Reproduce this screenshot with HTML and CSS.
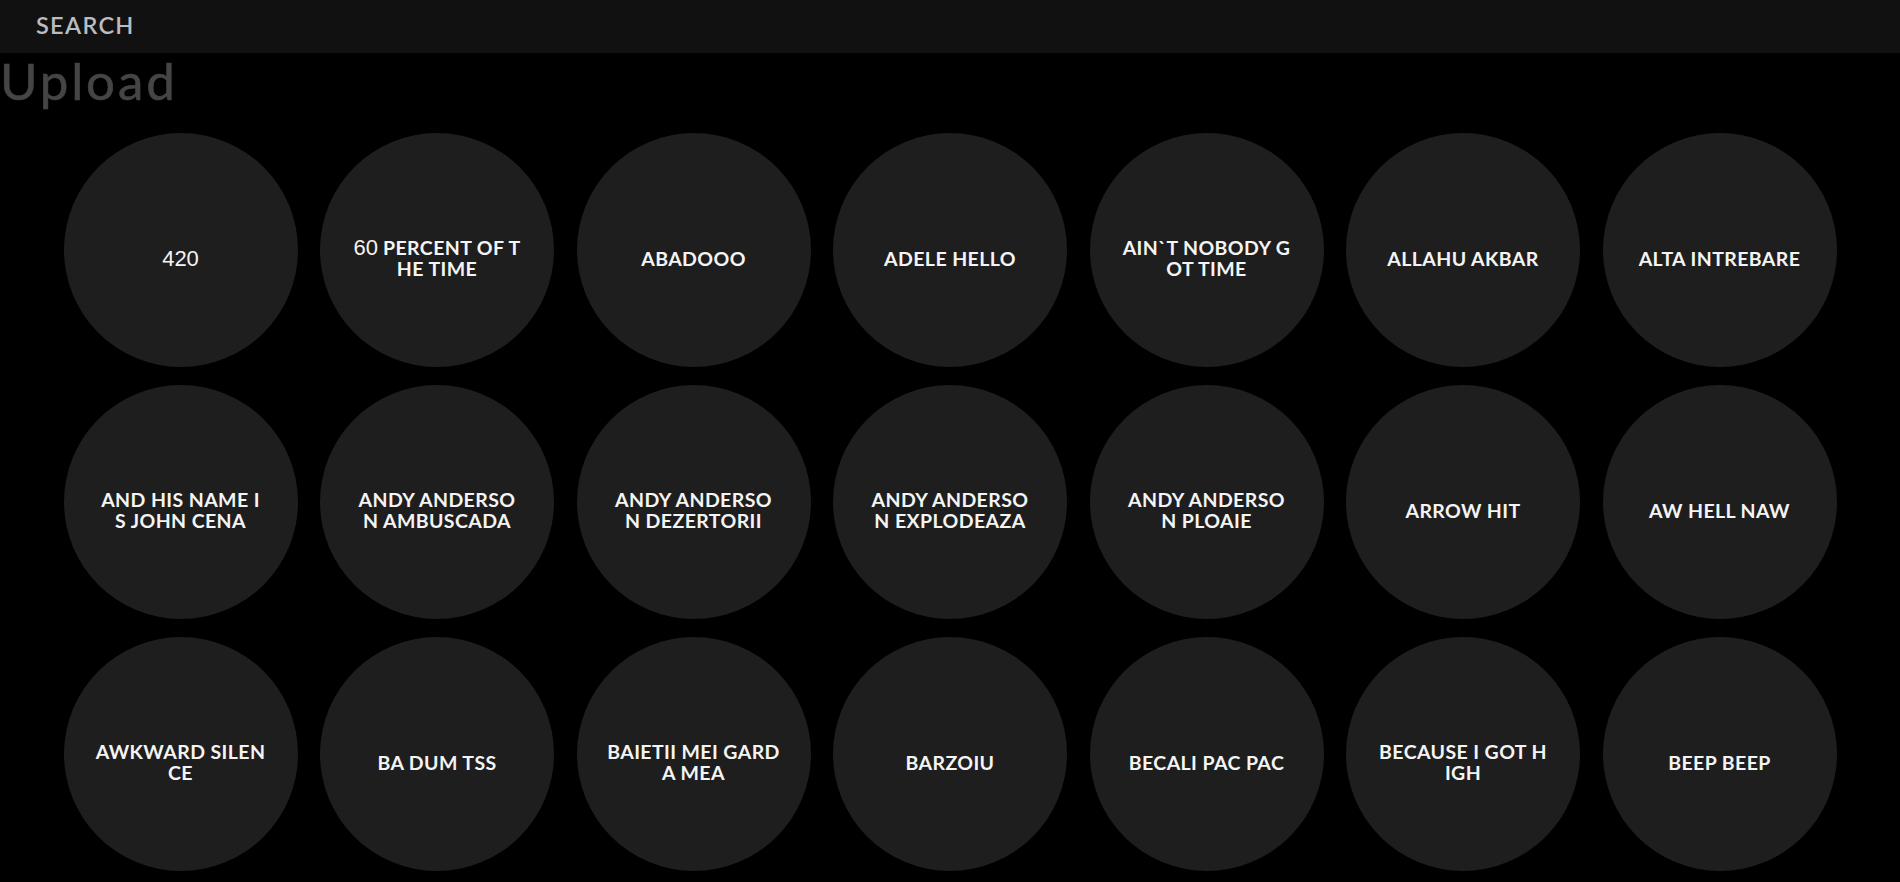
FILE: index.html
```html
<!DOCTYPE html>
<html lang="en">
<head>
<meta charset="utf-8">
<title>Soundboard</title>
<link rel="stylesheet" href="styles.css">
</head>
<body>
<header class="topbar">
  <span class="search">SEARCH</span>
</header>
<h1 class="title">Upload</h1>
<main class="grid">
  <button class="sound"><span class="label"><span class="num">420</span></span></button>
  <button class="sound"><span class="label"><span class="num">60</span> PERCENT OF T<br>HE TIME</span></button>
  <button class="sound"><span class="label">ABADOOO</span></button>
  <button class="sound"><span class="label">ADELE HELLO</span></button>
  <button class="sound"><span class="label">AIN`T NOBODY G<br>OT TIME</span></button>
  <button class="sound"><span class="label">ALLAHU AKBAR</span></button>
  <button class="sound"><span class="label">ALTA INTREBARE</span></button>

  <button class="sound"><span class="label">AND HIS NAME I<br>S JOHN CENA</span></button>
  <button class="sound"><span class="label">ANDY ANDERSO<br>N AMBUSCADA</span></button>
  <button class="sound"><span class="label">ANDY ANDERSO<br>N DEZERTORII</span></button>
  <button class="sound"><span class="label">ANDY ANDERSO<br>N EXPLODEAZA</span></button>
  <button class="sound"><span class="label">ANDY ANDERSO<br>N PLOAIE</span></button>
  <button class="sound"><span class="label">ARROW HIT</span></button>
  <button class="sound"><span class="label">AW HELL NAW</span></button>

  <button class="sound"><span class="label">AWKWARD SILEN<br>CE</span></button>
  <button class="sound"><span class="label">BA DUM TSS</span></button>
  <button class="sound"><span class="label">BAIETII MEI GARD<br>A MEA</span></button>
  <button class="sound"><span class="label">BARZOIU</span></button>
  <button class="sound"><span class="label">BECALI PAC PAC</span></button>
  <button class="sound"><span class="label">BECAUSE I GOT H<br>IGH</span></button>
  <button class="sound"><span class="label">BEEP BEEP</span></button>
</main>
</body>
</html>
```

FILE: styles.css
```css
html, body {
  margin: 0;
  padding: 0;
  background: #000;
}

body {
  font-family: "Lato", "Noto Sans", sans-serif;
  overflow: hidden;
}

.topbar {
  height: 53px;
  background: #111111;
  display: flex;
  align-items: flex-start;
  padding-left: 36px;
  box-sizing: border-box;
}

.search {
  font-size: 23.5px;
  line-height: 50px;
  font-weight: 600;
  letter-spacing: 1.3px;
  color: #b9bcc0;
}

.title {
  margin: 0;
  font-size: 51px;
  line-height: 55px;
  font-weight: 400;
  letter-spacing: 2.9px;
  color: #454545;
  -webkit-text-stroke: 0.6px #454545;
}

.grid {
  margin-top: 25px;
  display: grid;
  grid-template-columns: repeat(7, 234px);
  grid-auto-rows: 234px;
  column-gap: 22.5px;
  row-gap: 18px;
  justify-content: center;
}

.sound {
  width: 234px;
  height: 234px;
  border: 0;
  border-radius: 50%;
  background: #1e1e1e;
  display: flex;
  align-items: center;
  justify-content: center;
  padding: 16px 0 0 0;
  box-sizing: border-box;
  font-family: inherit;
  cursor: pointer;
}

.label {
  font-size: 19.5px;
  line-height: 21px;
  font-weight: 700;
  letter-spacing: 0.4px;
  color: #f4f4f4;
  text-align: center;
}

.num {
  font-family: "Liberation Sans", Arial, sans-serif;
  font-weight: 400;
  font-size: 22px;
  letter-spacing: 0;
}
```
